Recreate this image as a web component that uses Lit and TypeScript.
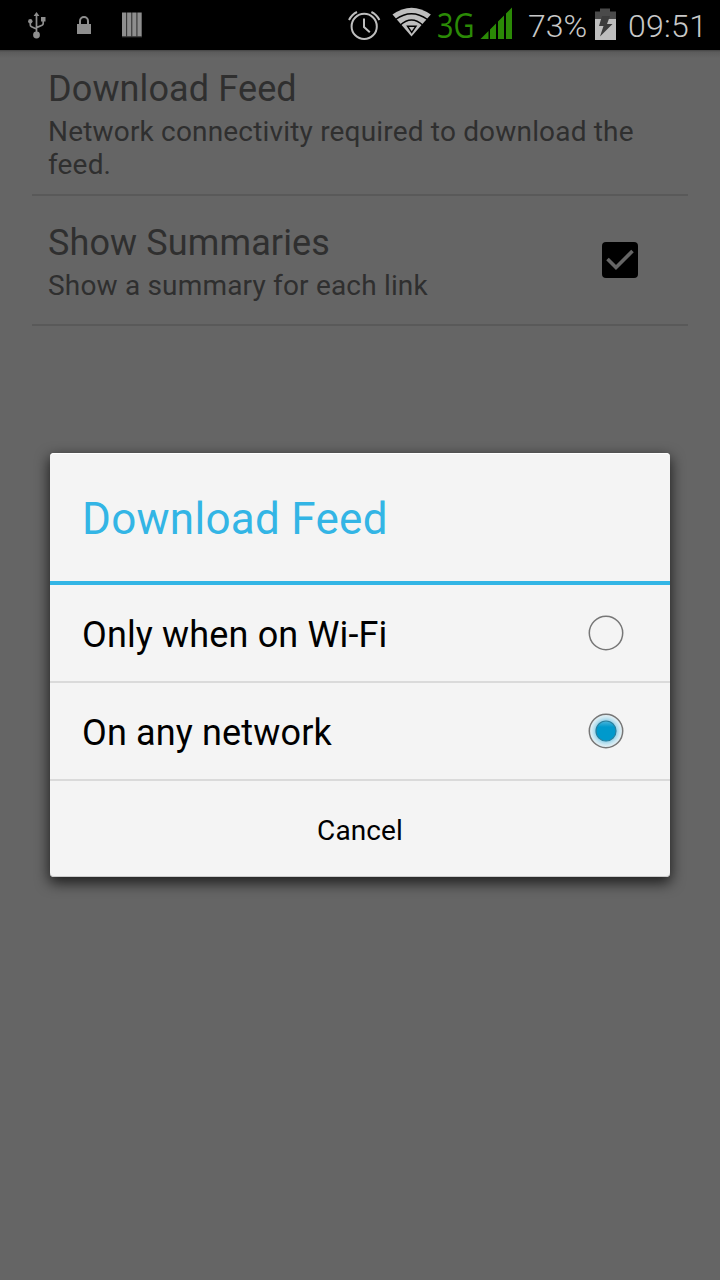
import { LitElement, html, css, svg } from "lit";
import { customElement } from "lit/decorators.js";

@customElement("status-bar")
class StatusBar extends LitElement {
  static styles = css`
    :host { display: flex; height: 50px; background: #000; color: #c8c8c8; font: 300 32px/52px Roboto, sans-serif; }
    svg { display: block; flex: none; }
    .left { width: 345px; flex: none; }
    .right { width: 172px; flex: none; }
    .net { fill: #2b8a06; color: #2b8a06; }
    .values { display: flex; width: 203px; flex: none; white-space: nowrap; }
    .percent { box-sizing: border-box; width: 78px; padding-left: 11px; flex: none; }
    .clock { padding-left: 11px; letter-spacing: .3px; }
    .three { font: 400 34px "Open Sans", sans-serif; }
  `;
  render() {
    return html`
      <svg class="left" width="345" height="50" viewBox="0 0 345 50">
        <g stroke="#8e8e8e" stroke-width="1.700" fill="none">
          <path d="M36.500 15V34M30.300 21V25Q30.300 26.300 31.500 26.800L36.500 29M43.200 20V23.400Q43.200 24.600 42 25.200L36.500 27.600" />
        </g>
        <g fill="#8e8e8e">
          <path d="M36.500 12L39.400 16H33.600Z" /><circle cx="30.300" cy="21.200" r="2.200" />
          <path d="M41 17h4.500v4.500H41zM77 24h14v10H77z" /><circle cx="36.500" cy="35" r="3.400" />
          <path d="M122 12.500h4.400v24H122zM127.100 12.500h4.400v24h-4.400zM132.200 12.500h4.400v24h-4.400zM137.300 12.500h4.400v24h-4.400z" />
        </g>
        <path d="M80 24.500V21a4 4 0 0 1 8 0v3.500" fill="none" stroke="#8e8e8e" stroke-width="2" />
        <path d="M122 36.800h20" stroke="#444" stroke-width="1" />
      </svg>
      <svg class="right" width="172" height="50" viewBox="345 0 172 50">
        <g fill="none" stroke="#bebebe" stroke-width="2">
          <circle cx="364.200" cy="26.400" r="12.600" />
          <path d="M364 18.500V27L369.800 32.300M349 20Q351.800 14.500 357 12M371.400 12Q376.600 14.500 379.400 20" />
        </g>
        <path d="M411.500 36.500L392.500 14.500Q411.500 .8 430.800 14.500Z" fill="#bebebe" />
        <g fill="none" stroke="#000" stroke-width="1.500">
          <path d="M395.500 19.500Q411.500 8 427.500 19.500M400.300 25Q411.500 15 422.700 25" />
          <path d="M407.500 26.200h8.500L411.700 32.500Z" stroke-width="1.400" />
        </g>
        <g class="net">
          <text class="three" x="437" y="37.500" textLength="37.500" lengthAdjust="spacingAndGlyphs">3G</text>
          <path d="M480.500 39L488.500 31V39ZM490 39V29.500L496 23.500V39ZM498 39V21.500L504 15.500V39ZM506 39V13.500L512 7.500V39Z" />
        </g>
      </svg>
      <div class="values">
        <span class="percent">73%</span>
        <svg width="22" height="50" viewBox="595 0 22 50">
          <path d="M595 11.500h5v-3h10v3h6V20H595Z" fill="#4a4a4a" />
          <path d="M595 19h21v21H595Z" fill="#bebebe" />
          <path d="M602 16h8l-3 8h5.500L600 36.500L603.500 26H599Z" fill="#3c3c3c" />
        </svg>
        <span class="clock">09:51</span>
      </div>
    `;
  }
}

@customElement("preference-item")
class PreferenceItem extends LitElement {
  static properties = { heading: {}, summary: {}, checked: { type: Boolean } };
  declare heading: string;
  declare summary: string;
  declare checked: boolean;
  static styles = css`
    :host { display: flex; align-items: center; box-sizing: border-box; margin: 0 32px; padding: 0 50px 0 16px;
      border-bottom: 2px solid #595959; color: #2f2f2f; font-family: Roboto, sans-serif; }
    .copy { flex: 1; padding-top: 4px; }
    .heading { font-size: 36px; line-height: 42px; letter-spacing: .12px; }
    .summary { font-size: 28px; line-height: 33px; margin-top: 5px; letter-spacing: .18px; }
    svg { display: block; flex: none; }
  `;
  render() {
    return html`
      <div class="copy">
        <div class="heading">${this.heading}</div>
        <div class="summary">${this.summary}</div>
      </div>
      ${this.checked
        ? html`<svg width="36" height="36" viewBox="0 0 36 36">
            <rect width="36" height="36" rx="4" /><path d="M5.500 17L14 25.500L30.500 9" fill="none" stroke="#656565" stroke-width="3.600" />
          </svg>`
        : null}
    `;
  }
}

@customElement("choice-row")
class ChoiceRow extends LitElement {
  static properties = { label: {}, selected: { type: Boolean } };
  declare label: string;
  declare selected: boolean;
  static styles = css`
    :host { display: flex; align-items: center; justify-content: space-between; height: 96px; padding: 0 46px 0 32px;
      border-bottom: 2px solid #dadada; font: 400 36px/42px Roboto, sans-serif; color: #000; }
    .label { padding-top: 3px; letter-spacing: .15px; }
  `;
  render() {
    return html`<span class="label">${this.label}</span>
      <svg width="36" height="36" viewBox="0 0 36 36">
        <defs>
          <radialGradient id="glow"><stop offset=".58" stop-color="#8fcfe8" /><stop offset=".8" stop-color="#c8e6f1" /><stop offset="1" stop-color="#eef3f5" /></radialGradient>
          <linearGradient id="dot" x2="0" y2="1"><stop offset="0" stop-color="#4db5da" /><stop offset=".3" stop-color="#0099cc" /></linearGradient>
        </defs>
        <circle cx="18" cy="18" r="16.700" fill=${this.selected ? "url(#glow)" : "none"} stroke="#777" stroke-width="1.500" />
        ${this.selected ? svg`<circle cx="18" cy="18" r="10" fill="url(#dot)" stroke="#287f9d" stroke-width="1.200" />` : null}
      </svg>`;
  }
}

@customElement("app-root")
class AppRoot extends LitElement {
  static styles = css`
    :host { display: block; position: relative; width: 720px; height: 1280px; overflow: hidden; background: #656565; font-family: Roboto, sans-serif; }
    .page { background: linear-gradient(#444, #5c5c5c 2px, #656565 8px); height: 1230px; }
    .first { height: 146px; padding-top: 1px; padding-right: 16px; }
    .second { height: 130px; padding-bottom: 1px; }
    .dialog { position: absolute; left: 50px; top: 453px; width: 620px; height: 424px; background: #f4f4f4; border-radius: 4px;
      box-shadow: 0 5px 14px 1px rgba(0,0,0,.7), inset 0 1px #fff, inset 0 -1px #ccc; }
    .title { height: 128px; padding-left: 32px; border-bottom: 4px solid #33b5e5; color: #33b5e5; font-size: 44px; line-height: 132px; letter-spacing: .28px; }
    .cancel { height: 96px; line-height: 100px; text-align: center; font-size: 28px; letter-spacing: .1px; }
  `;
  render() {
    return html`
      <status-bar></status-bar>
      <div class="page">
        <preference-item class="first" heading="Download Feed" summary="Network connectivity required to download the feed."></preference-item>
        <preference-item class="second" heading="Show Summaries" summary="Show a summary for each link" checked></preference-item>
      </div>
      <div class="dialog">
        <div class="title">Download Feed</div>
        <choice-row label="Only when on Wi-Fi"></choice-row>
        <choice-row label="On any network" selected></choice-row>
        <div class="cancel">Cancel</div>
      </div>
    `;
  }
}
